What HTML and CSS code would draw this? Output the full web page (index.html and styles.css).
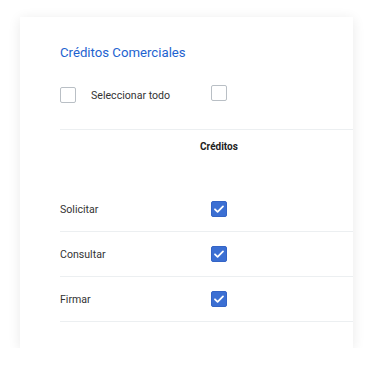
FILE: index.html
```html
<!DOCTYPE html>
<html lang="es">
<head>
<meta charset="utf-8">
<link rel="stylesheet" href="styles.css">
</head>
<body>
<div class="card">
  <h2 class="title">Créditos Comerciales</h2>
  <div class="grid select-row">
    <label class="select-all"><span class="box"></span><span>Seleccionar todo</span></label>
    <div class="cell"><span class="box up"></span></div>
  </div>
  <div class="grid head">
    <div></div>
    <div class="cell colhead">Créditos</div>
  </div>
  <div class="grid row">
    <div class="label">Solicitar</div>
    <div class="cell"><span class="box checked"><svg viewBox="0 0 16 16"><path d="M4 8.3l2.6 2.5L12 5.4" /></svg></span></div>
  </div>
  <div class="grid row">
    <div class="label">Consultar</div>
    <div class="cell"><span class="box checked"><svg viewBox="0 0 16 16"><path d="M4 8.3l2.6 2.5L12 5.4" /></svg></span></div>
  </div>
  <div class="grid row">
    <div class="label">Firmar</div>
    <div class="cell"><span class="box checked"><svg viewBox="0 0 16 16"><path d="M4 8.3l2.6 2.5L12 5.4" /></svg></span></div>
  </div>
</div>
</body>
</html>
```
FILE: styles.css
```css
html, body { margin: 0; padding: 0; background: #fff; }
body { font-family: Roboto, "Noto Sans", sans-serif; }
.card {
  margin: 17px 20px 0 20px;
  width: 333px;
  height: 331px;
  box-sizing: border-box;
  background: #fff;
  box-shadow: 0 2px 12px rgba(0,0,0,0.09);
  padding-left: 40px;
  padding-top: 27px;
}
.title {
  margin: 0;
  font-size: 13.2px;
  line-height: 18px;
  font-weight: 400;
  color: #1e63d0;
}
.grid {
  display: grid;
  grid-template-columns: 130px 58px;
  align-items: center;
}
.select-row {
  margin-top: 18px;
  height: 30px;
  padding-bottom: 19px;
  border-bottom: 1px solid #eceff1;
}
.select-all {
  display: flex;
  align-items: center;
  gap: 15px;
  font-size: 10.6px;
  color: #333;
}
.cell { display: flex; justify-content: center; }
.box {
  width: 16px;
  height: 16px;
  box-sizing: border-box;
  border: 1.5px solid #b9bfc5;
  border-radius: 2px;
  display: inline-block;
  position: relative;
}
.box.up { top: -2px; }
.box.checked {
  border: 1px solid #3464c6;
  background: #3b6fd3;
}
.box svg {
  position: absolute;
  left: -1px; top: -1px;
  width: 16px; height: 16px;
}
.box svg path {
  fill: none;
  stroke: #fff;
  stroke-width: 1.8;
  stroke-linecap: round;
  stroke-linejoin: round;
}
.head {
  height: 57px;
  align-items: start;
}
.colhead {
  font-size: 10px;
  font-weight: 700;
  color: #222;
  line-height: 14px;
  padding-top: 10px;
}
.row {
  height: 44px;
  border-bottom: 1px solid #eceff1;
}
.label {
  font-size: 10.6px;
  color: #333;
}
```
